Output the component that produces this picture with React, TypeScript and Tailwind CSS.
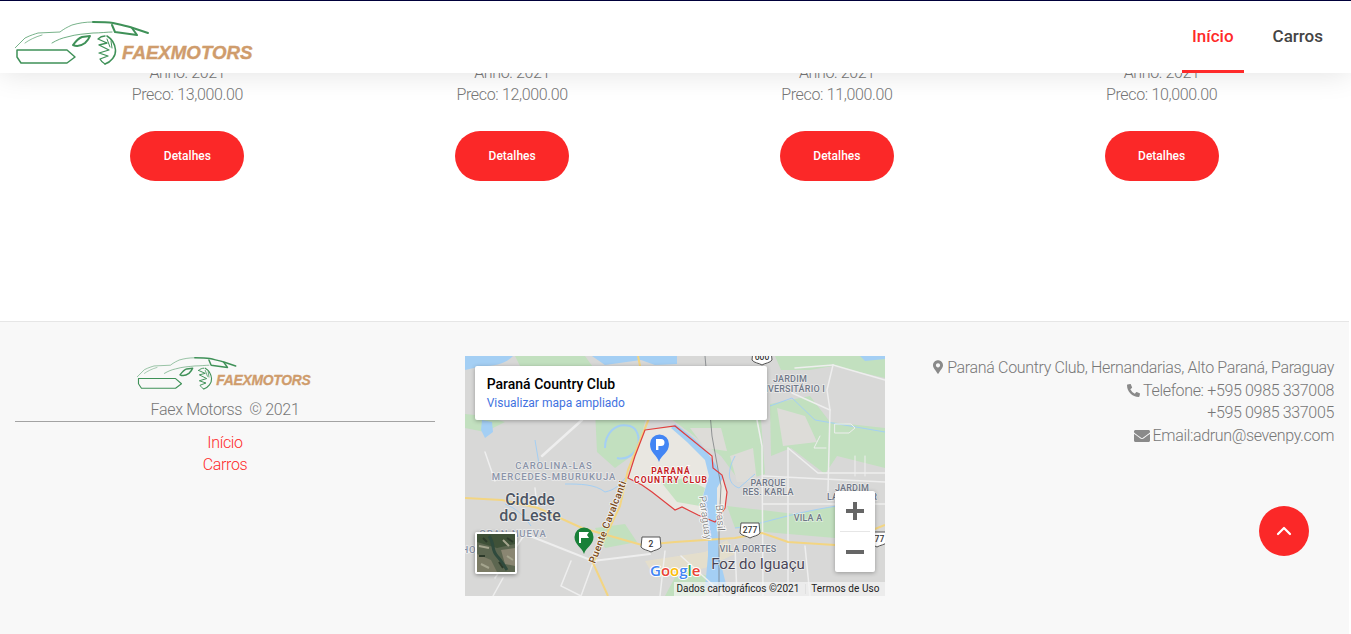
import React from 'react';
import { FaEnvelope, FaMapMarkerAlt, FaPhoneAlt } from 'react-icons/fa';

const cars = ['13,000.00', '12,000.00', '11,000.00', '10,000.00'];

const Logo: React.FC<{ className: string }> = ({ className }) => (
  <svg viewBox="0 0 240 45" className={className}>
    <g fill="none" stroke="#3f9158" strokeLinecap="round" strokeLinejoin="round">
      <path d="M0 28 L10 18 C16 15 20 14 23 13 L45 12 C50 8 55 6 57 5 C64 3 70 2 78 2" strokeWidth="1" opacity="0.7" />
      <path d="M78 2 C86 2 92 2 98 3 C106 5 112 6 118 8 L133 13" strokeWidth="2" />
      <path d="M10 23 C14 20 20 17 27 15" strokeWidth="1" opacity="0.6" />
      <path d="M37 23 C42 20 47 18 52 17 C62 14 70 14 78 13 C86 13 92 12 97 12" strokeWidth="1" opacity="0.75" />
      <path d="M97 5 L100 12 L122 15 L117 8" strokeWidth="2" />
      <path d="M58 25 C61 21 64 18 67 17 L75 16 C74 19 72 21 70 23 C66 26 62 27 58 25 Z" strokeWidth="2" />
      <path d="M2 30 L52 30 L60 37 L52 43 L6 43 L2 37 Z" strokeWidth="1.5" />
      <path d="M92 16 C97 19 100 24 100.500 30 C101 36 96 42 90 44" strokeWidth="1.5" />
      <path d="M83 19 C85 17 88 16 90 16 M83 19 L92 23 L84 25 L94 30 L84 33 L93 36 L85 39 C86 41 88 43 90 44" strokeWidth="1.3" />
      <path d="M92 19 L95 27 M96 21 L97 28" strokeWidth="1" />
    </g>
    <text x="107" y="38.500" fill="#cf9c6c" stroke="#cf9c6c" strokeWidth="0.4" fontSize="18.700" fontWeight="700" fontStyle="italic" fontFamily="'Liberation Sans', sans-serif">
      FAEXMOTORS
    </text>
  </svg>
);

const Badge: React.FC<{ x: number; y: number; label: string }> = ({ x, y, label }) => (
  <g>
    <path d={`M${x - 9} ${y - 7} L${x + 9} ${y - 7} L${x + 10} ${y + 3} C${x + 8} ${y + 6} ${x + 3} ${y + 6} ${x} ${y + 8} C${x - 3} ${y + 6} ${x - 8} ${y + 6} ${x - 10} ${y + 3} Z`} fill="#fff" stroke="#555" strokeWidth="1" />
    <text x={x} y={y + 3} textAnchor="middle" fontSize="8.5" fontWeight="500" fill="#333">{label}</text>
  </g>
);

const clubArea = 'M180 74 L210 70 L247 100 L248 112 L257 119 L262 136 L260 152 L250 166 L233 159 L217 151 L210 154 L187 136 L177 129 L163 122 L170 100 Z';

const MapArt: React.FC = () => (
  <svg viewBox="0 0 420 240" className="block h-full w-full" fontFamily="Roboto, sans-serif">
    <rect width="420" height="240" fill="#d8d8d7" />
    {/* zonas verdes */}
    <g fill="#c2e0bf">
      <path d="M50 0 L120 0 L130 14 L60 20 Z" />
      <path d="M0 58 L20 60 L40 66 L20 76 L0 72 Z" />
      <path d="M130 54 L182 58 L172 96 L150 112 L132 96 Z" />
      <path d="M205 62 L295 50 L300 118 L275 126 L256 100 Z" />
      <path d="M305 48 L345 40 L365 66 L420 72 L420 112 L372 100 L360 118 L326 92 L306 100 Z" />
      <path d="M310 0 L420 0 L420 22 L368 10 L345 14 L316 14 Z" />
      <path d="M262 150 L330 158 L370 150 L370 182 L300 176 L270 172 Z" />
      <path d="M130 172 L160 168 L172 186 L140 192 Z" />
      <path d="M215 212 L250 222 L240 240 L200 240 Z" />
    </g>
    <g fill="#dddcd8">
      <path d="M225 72 L256 72 L262 95 L240 92 Z" />
      <path d="M265 100 L288 92 L292 126 L272 126 Z" />
      <path d="M312 52 L340 60 L352 86 L318 90 Z" />
    </g>
    {/* clube */}
    <path d={clubArea} fill="#e9e7e1" />
    <path d="M196 126 L220 122 L240 132 L235 150 L212 146 Z" fill="#c6e3c2" />
    <path d="M180 205 L240 196 L262 184 L270 198 L240 212 L190 222 Z" fill="#ede3c4" opacity="0.6" />
    {/* agua */}
    <g fill="#a4cff4">
      <path d="M0 0 L48 0 C40 8 30 10 18 10 L0 14 Z" />
      <path d="M17 64 L27 66 L28 76 L20 82 L16 74 Z" />
      <path d="M127 0 L212 0 L212 8 L190 9 L176 4 L140 9 Z" />
      <path d="M395 0 L420 0 L420 3 L400 5 Z" />
      <path d="M210 68 C224 78 240 90 250 108 L258 122 L252 132 L252 168 L254 200 L262 232 L240 232 L243 200 L243 165 L238 140 L244 120 L240 104 L222 86 L206 72 Z" />
    </g>
    <g fill="none" stroke="#a4cff4" strokeWidth="1">
      <path d="M140 92 C140 78 150 66 165 70 C172 72 176 82 172 92 C168 100 160 104 152 102" strokeWidth="2" />
      <path d="M100 128 C115 128 130 128 140 136 C150 134 156 128 160 122" />
      <path d="M270 100 C262 115 262 128 274 132 L290 118" />
      <path d="M270 172 C300 168 320 158 372 150" />
      <path d="M305 50 L327 42 L350 64 L420 76" />
      <path d="M70 84 L74 108 M40 148 C50 152 58 158 66 170" />
    </g>
    {/* ruas */}
    <g fill="none" stroke="#eeeeee" strokeLinecap="round">
      <g strokeWidth="1.500">
        <path d="M292 64 L297 90 L298 240" />
        <path d="M323 92 L323 240" />
        <path d="M327 37 L365 54 L363 135" />
        <path d="M368 9 L362 34 L365 54" />
        <path d="M368 9 L420 24" />
        <path d="M330 12 L368 9" />
        <path d="M323 92 L353 117 L420 117" />
        <path d="M298 148 L420 148" />
        <path d="M298 120 L420 126" />
        <path d="M117 64 L77 100" strokeWidth="2.500" />
        <path d="M60 178 L128 205 L185 198" strokeWidth="2" />
        <path d="M106 205 L96 230 L116 240 L128 207" />
        <path d="M38 222 L28 240 M0 196 L40 196" />
        <path d="M70 132 L72 150 M20 96 L30 125" />
        <path d="M200 195 L195 240 M216 200 L260 240 M270 190 L272 240 M340 190 L345 240" />
        <path d="M60 178 L30 222" />
      </g>
      <path d="M370 68 h16 l4 4 l-6 5 h-14 z M355 80 l-6 12 h12 M390 100 v20 M400 100 v20" strokeWidth="1" />
    </g>
    {/* rodovias */}
    <g fill="none" stroke="#f3d582" strokeWidth="2" strokeLinejoin="round">
      <path d="M173 0 L185 60 L163 114 L155 150 L128 207 L143 240" />
      <path d="M0 142 L37 144 L73 152 L117 172 L177 189 L210 186 L270 182 L297 177 L323 186 L370 189 L420 169" />
    </g>
    <path d="M240 0 L247 80 L256 130 L254 170 L254 240" fill="none" stroke="#6f7378" strokeWidth="1" opacity="0.7" />
    <path d={clubArea} fill="none" stroke="#df3f3f" strokeWidth="1.200" />

    {/* rotulos */}
    <g fontWeight="500" fontSize="9.500" fill="#8a93a8" textAnchor="middle" letterSpacing="0.9" stroke="#fff" strokeWidth="1.500" strokeOpacity="0.5" paintOrder="stroke">
      <text x="89" y="113">CAROLINA-LAS</text>
      <text x="89" y="124">MERCEDES-MBURUKUJA</text>
      <text x="48" y="181">GRAN NUEVA</text>
      <text x="4" y="197">HO</text>
    </g>
    <g fontWeight="500" fontSize="9" fill="#6f7787" textAnchor="middle" letterSpacing="0.2" stroke="#fff" strokeWidth="1.500" strokeOpacity="0.5" paintOrder="stroke">
      <text x="325" y="26">JARDIM</text>
      <text x="360" y="36" textAnchor="end">UNIVERSITÁRIO I</text>
      <text x="303" y="130">PARQUE</text>
      <text x="303" y="139">RES. KARLA</text>
      <text x="387" y="135">JARDIM</text>
      <text x="387" y="144">LAGO AZUR</text>
      <text x="343" y="165">VILA A</text>
      <text x="283" y="196">VILA PORTES</text>
    </g>
    <g fontWeight="700" fontSize="8.500" fill="#c5221f" textAnchor="middle" letterSpacing="1" stroke="#fff" strokeWidth="1.500" paintOrder="stroke">
      <text x="206" y="118">PARANÁ</text>
      <text x="206" y="127">COUNTRY CLUB</text>
    </g>
    <g fontWeight="500" fill="#4d5563" textAnchor="middle" stroke="#fff" strokeWidth="1.500" strokeOpacity="0.6" paintOrder="stroke">
      <text x="65" y="149" fontSize="16">Cidade</text>
      <text x="65" y="165" fontSize="16">do Leste</text>
      <text x="293" y="213" fontSize="15" fontWeight="400" fill="#4a4556">Foz do Iguaçu</text>
    </g>
    <text x="143" y="169" transform="rotate(-69 143 166)" textAnchor="middle" fontSize="10" fontWeight="500" fill="#7a4a1a" letterSpacing="0.4" stroke="#fff" strokeWidth="1.500" strokeOpacity="0.7" paintOrder="stroke">Puente Cavalcanti</text>
    <text x="240" y="165" transform="rotate(82 240 162)" textAnchor="middle" fontSize="10" fill="#5f5f5f" letterSpacing="0.4" stroke="#fff" strokeWidth="2" strokeOpacity="0.8" paintOrder="stroke">Paraguay</text>
    <text x="255" y="165" transform="rotate(86 255 162)" textAnchor="middle" fontSize="10" fill="#5f5f5f" letterSpacing="0.4" stroke="#fff" strokeWidth="2" strokeOpacity="0.8" paintOrder="stroke">Brasil</text>

    <Badge x={297} y={1} label="600" />
    <Badge x={285} y={174} label="277" />
    <Badge x={186} y={188} label="2" />
    <Badge x={412} y={183} label="277" />

    {/* pins */}
    <path d="M194 106 C192 99 185 97 185 88 A9.500 9.500 0 0 1 204 88 C204 97 196 99 194 106 Z" fill="#4285f4" />
    <path d="M191 83 H196 A3.200 3.200 0 0 1 196 90 H193.400 V94 H191 Z" fill="#fff" />
    <path d="M119 198 C117 191 109.500 189 109.500 181 A9.500 9.500 0 0 1 128.500 181 C128.500 189 121 191 119 198 Z" fill="#188038" />
    <path d="M114 176 H124 L122 179 L124 182 H116 V187 H114 Z" fill="#fff" />

    <text x="185" y="220" fontSize="15" fontWeight="600" stroke="#fff" strokeWidth="2" paintOrder="stroke" fontFamily="'Open Sans', sans-serif">
      <tspan fill="#4285f4">G</tspan>
      <tspan fill="#ea4335">o</tspan>
      <tspan fill="#fbbc05">o</tspan>
      <tspan fill="#4285f4">g</tspan>
      <tspan fill="#34a853">l</tspan>
      <tspan fill="#ea4335">e</tspan>
    </text>
  </svg>
);

const Satellite: React.FC = () => (
  <svg viewBox="0 0 38 38" className="block h-full w-full">
    <rect width="38" height="38" fill="#5c6650" />
    <path d="M0 0 H38 V10 L20 14 L0 8 Z" fill="#3f5138" />
    <path d="M0 20 L14 26 L20 38 H0 Z" fill="#7c7c66" />
    <path d="M24 16 L38 14 V32 L28 30 Z" fill="#8a8672" />
    <path d="M12 2 C18 10 14 16 20 22 C24 26 26 30 30 36" fill="none" stroke="#2f4a3d" strokeWidth="3" />
    <path d="M2 12 L12 14 M26 6 L32 12 M4 30 L12 34 M30 22 L36 26" stroke="#a5a58e" strokeWidth="2" />
    <path d="M6 4 L10 8 M22 28 L26 34 M30 4 L36 8 M2 22 L8 22" stroke="#2c3a2a" strokeWidth="2" />
  </svg>
);

const GoogleMap: React.FC = () => (
  <div className="relative h-[240px] w-[420px] overflow-hidden bg-[#d8d8d7] font-[Roboto,sans-serif] tracking-normal">
    <MapArt />
    <div className="absolute left-[10px] top-[10px] h-[54px] w-[292px] rounded-[2px] bg-white pl-3 pt-2 shadow-[0_1px_4px_rgba(0,0,0,0.3)]">
      <p className="text-[14px] font-medium leading-5 text-black">Paraná Country Club</p>
      <p className="text-[12px] font-normal leading-[18px] text-[#4272e0]">Visualizar mapa ampliado</p>
    </div>
    <div className="absolute left-[10px] top-[176px] h-[42px] w-[42px] rounded-[2px] border-2 border-white shadow-[0_1px_4px_rgba(0,0,0,0.4)]">
      <Satellite />
    </div>
    <div className="absolute right-[10px] top-[135px] flex h-[81px] w-[40px] flex-col items-center rounded-[2px] bg-white shadow-[0_1px_4px_rgba(0,0,0,0.3)]">
      <div className="relative h-10 w-full">
        <span className="absolute left-[11px] top-[18px] h-[4px] w-[18px] bg-[#666]" />
        <span className="absolute left-[18px] top-[11px] h-[18px] w-[4px] bg-[#666]" />
      </div>
      <div className="h-px w-[30px] bg-[#e6e6e6]" />
      <div className="relative h-10 w-full">
        <span className="absolute left-[11px] top-[18px] h-[4px] w-[18px] bg-[#666]" />
      </div>
    </div>
    <div className="absolute bottom-0 right-0 flex h-[14px] items-center bg-[#f5f5f5]/70 text-[10px] font-normal leading-none text-[#222]">
      <span className="pl-[2px] pr-[6px]">Dados cartográficos ©2021</span>
      <span className="border-l border-[#e0e0e0] px-[5px] tracking-[0.1px]">Termos de Uso</span>
    </div>
  </div>
);

export default function App() {
  return (
    <div className="relative h-[634px] overflow-hidden bg-white pr-[2px] font-[Roboto,sans-serif] text-[16px] font-light tracking-[-0.34px] text-[#777]">
      <header className="absolute inset-x-0 top-0 z-10 flex h-[73px] items-start justify-between border-t border-[#00003a] bg-white pl-[15px] pr-[17px] tracking-normal shadow-[0_0_30px_rgba(0,0,0,0.12)]">
        <Logo className="mt-[19px] h-[45px] w-[240px]" />
        <nav className="mr-px flex text-[17px] font-medium">
          <a className="flex h-[72px] items-center border-b-[3px] border-[#ff2a2a] px-[10px] pt-[3px] text-[#ff2a2a]">Início</a>
          <a className="ml-[19px] flex h-[72px] items-center px-[10px] py-[3px] text-[#444]">Carros</a>
        </nav>
      </header>

      <main className="h-[321px] px-[25px] pt-[62px]">
        <div className="grid grid-cols-4">
          {cars.map((price) => (
            <div key={price} className="flex flex-col items-center leading-[22px]">
              <p>Anno: 2021</p>
              <p>Preco: {price}</p>
              <button className="mt-[25px] h-[50px] w-[114px] rounded-full bg-[#fb2828] text-[12px] font-medium tracking-normal text-white">
                Detalhes
              </button>
            </div>
          ))}
        </div>
      </main>

      <footer className="grid h-[313px] grid-cols-3 border-t border-[#e6e6e6] bg-[#f8f8f8] px-[15px] pt-[34px]">
        <div className="flex w-[420px] flex-col items-center">
          <Logo className="ml-[2px] h-[34px] w-[178px]" />
          <p className="mt-[9px] leading-[22px]">Faex Motorss &nbsp;© 2021</p>
          <div className="mb-[10px] h-px w-full bg-[#a3a3a3]" />
          <a className="leading-[22px] text-[#ff2a2a]">Início</a>
          <a className="leading-[22px] text-[#ff2a2a]">Carros</a>
        </div>
        <div className="ml-[10px]">
          <GoogleMap />
        </div>
        <div className="pt-px text-right leading-[22.5px]">
          <p><FaMapMarkerAlt className="mr-[4px] inline-block h-[14px] w-[10px] align-[-1px] text-[#8a8a8a]" />Paraná Country Club, Hernandarias, Alto Paraná, Paraguay</p>
          <p><FaPhoneAlt className="mr-[3px] inline-block h-[13px] w-[13px] align-[-1px] text-[#8a8a8a]" />Telefone: +595 0985 337008</p>
          <p>+595 0985 337005</p>
          <p><FaEnvelope className="mr-[3px] inline-block h-[16px] w-[16px] align-[-3px] text-[#8a8a8a]" />Email:adrun@sevenpy.com</p>
        </div>
      </footer>

      <button className="absolute left-[1259px] top-[506px] flex h-[50px] w-[50px] items-center justify-center rounded-full bg-[#fb2828]">
        <svg viewBox="0 0 16 10" className="h-[10px] w-[16px]" fill="none" stroke="#fff" strokeWidth="2.2" strokeLinecap="round" strokeLinejoin="round">
          <path d="M2 8 L8 2 L14 8" />
        </svg>
      </button>
    </div>
  );
}
